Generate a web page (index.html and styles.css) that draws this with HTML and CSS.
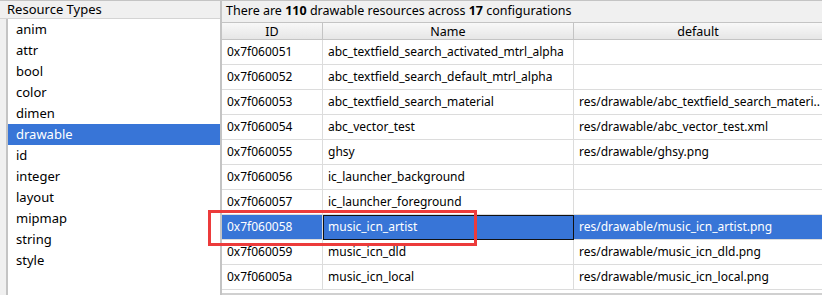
FILE: index.html
```html
<!DOCTYPE html>
<html lang="en">

<head>
    <meta charset="UTF-8">
    <title>Resources</title>
    <link rel="stylesheet" href="styles.css">
</head>

<body>
    <div class="window">
        <div class="types">
            <div class="types-title">Resource Types</div>
            <ul class="types-list">
                <li>anim</li>
                <li>attr</li>
                <li>bool</li>
                <li>color</li>
                <li>dimen</li>
                <li class="selected">drawable</li>
                <li>id</li>
                <li>integer</li>
                <li>layout</li>
                <li>mipmap</li>
                <li>string</li>
                <li>style</li>
            </ul>
        </div>
        <div class="resources">
            <div class="summary">There are <b>110</b> drawable resources across <b>17</b> configurations</div>
            <table class="res-table">
                <thead>
                    <tr>
                        <th class="col-id">ID</th>
                        <th class="col-name">Name</th>
                        <th class="col-default">default</th>
                    </tr>
                </thead>
                <tbody>
                    <tr><td>0x7f060051</td><td>abc_textfield_search_activated_mtrl_alpha</td><td></td></tr>
                    <tr><td>0x7f060052</td><td>abc_textfield_search_default_mtrl_alpha</td><td></td></tr>
                    <tr><td>0x7f060053</td><td>abc_textfield_search_material</td><td>res/drawable/abc_textfield_search_materi..</td></tr>
                    <tr><td>0x7f060054</td><td>abc_vector_test</td><td>res/drawable/abc_vector_test.xml</td></tr>
                    <tr><td>0x7f060055</td><td>ghsy</td><td>res/drawable/ghsy.png</td></tr>
                    <tr><td>0x7f060056</td><td>ic_launcher_background</td><td></td></tr>
                    <tr><td>0x7f060057</td><td>ic_launcher_foreground</td><td></td></tr>
                    <tr class="selected"><td>0x7f060058</td><td class="focus">music_icn_artist</td><td>res/drawable/music_icn_artist.png</td></tr>
                    <tr><td>0x7f060059</td><td>music_icn_dld</td><td>res/drawable/music_icn_dld.png</td></tr>
                    <tr><td>0x7f06005a</td><td>music_icn_local</td><td>res/drawable/music_icn_local.png</td></tr>
                </tbody>
            </table>
            <div class="hscroll"></div>
            <div class="mark"></div>
        </div>
    </div>
</body>

</html>
```

FILE: styles.css
```css
:root {
    --UiFont: 'Noto Sans', 'Noto Sans CJK SC', sans-serif;
    --Select: #3875d7;
    --Grid: #dcdcdc;
    --Frame: #c4c4c4;
}

body {
    margin: 0;
    padding: 0;
    background-color: #f0f0f0;
    font-family: var(--UiFont);
    font-size: 12px;
    color: #000;
}

.window {
    display: flex;
    width: 822px;
    height: 295px;
    overflow: hidden;
    border-top: 1px solid var(--Frame);
    box-sizing: border-box;
}

/* left: resource type list */
.types {
    width: 221px;
    display: flex;
    flex-direction: column;
    border-right: 1px solid var(--Frame);
}

.types-title {
    height: 17px;
    line-height: 16px;
    padding-left: 7px;
    font-size: 13px;
    border-bottom: 1px solid #d4d4d4;
}

.types-list {
    flex: 1;
    list-style: none;
    margin: 0 0 0 6px;
    padding: 0;
    background-color: white;
    border-left: 2px solid var(--Frame);
}

.types-list li {
    height: 21px;
    line-height: 21px;
    padding-left: 8px;
    font-size: 13px;
}

.types-list li.selected {
    background-color: var(--Select);
    color: white;
}

/* right: resource table */
.resources {
    flex: 1;
    position: relative;
    display: flex;
    flex-direction: column;
    border-left: 1px solid var(--Frame);
}

.summary {
    height: 21px;
    line-height: 20px;
    padding-left: 4px;
    font-size: 12.5px;
    border-bottom: 1px solid var(--Frame);
}

.res-table {
    table-layout: fixed;
    border-collapse: collapse;
    width: 600px;
    background-color: white;
}

.res-table th {
    height: 16px;
    padding: 0;
    font-weight: normal;
    font-size: 12.5px;
    line-height: 15px;
    background: linear-gradient(#f8f8f8, #e6e6e6);
    border-right: 1px solid var(--Frame);
    border-bottom: 1px solid var(--Frame);
}

.res-table th:last-child {
    border-right: none;
}

.col-id {
    width: 100px;
}

.col-name {
    width: 250px;
}

.res-table td {
    height: 24px;
    padding: 0 0 0 5px;
    font-size: 12px;
    line-height: 24px;
    white-space: nowrap;
    overflow: hidden;
    border-right: 1px solid var(--Grid);
    border-bottom: 1px solid var(--Grid);
}

.res-table td:last-child {
    border-right: none;
}

.res-table tr.selected td {
    background-color: var(--Select);
    color: white;
}

.res-table td.focus {
    outline: 1px solid #111;
    outline-offset: -1px;
}

.hscroll {
    flex: 1;
    background-color: white;
    border-bottom: 2px solid #d0d0d0;
}

/* annotation drawn over the selected row */
.mark {
    position: absolute;
    left: -14px;
    top: 209px;
    width: 263px;
    height: 30px;
    border: 3px solid #ec3b3b;
}
```
